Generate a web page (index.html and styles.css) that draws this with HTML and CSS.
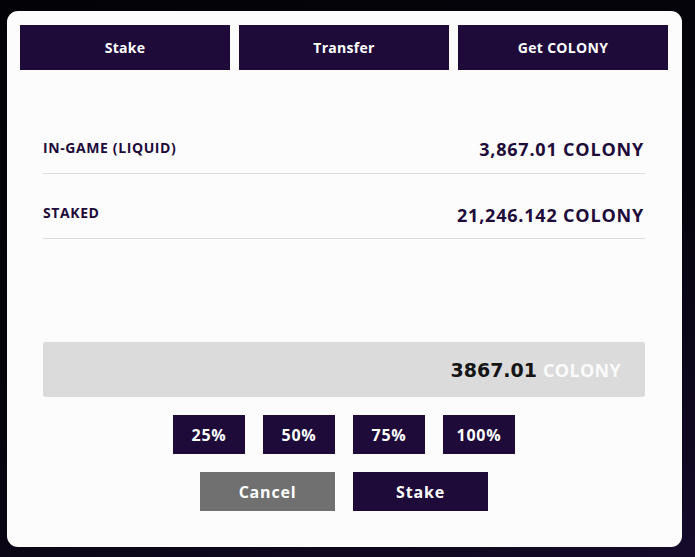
FILE: index.html
```html
<!DOCTYPE html>
<html lang="en">
<head>
    <meta charset="UTF-8">
    <meta name="viewport" content="width=device-width, initial-scale=1.0">
    <title>Stake COLONY</title>
    <link rel="stylesheet" href="styles.css">
</head>
<body>
    <div class="modal">
        <div class="tabs">
            <button class="tab">Stake</button>
            <button class="tab">Transfer</button>
            <button class="tab">Get COLONY</button>
        </div>

        <div class="content">
            <div class="balances">
                <div class="row">
                    <span class="label">IN-GAME (LIQUID)</span>
                    <span class="value">3,867.01 COLONY</span>
                </div>
                <div class="row">
                    <span class="label">STAKED</span>
                    <span class="value">21,246.142 COLONY</span>
                </div>
            </div>

            <div class="amount">
                <span class="amount-num">3867.01</span>
                <span class="amount-unit">COLONY</span>
            </div>

            <div class="percents">
                <button class="button pct">25%</button>
                <button class="button pct">50%</button>
                <button class="button pct">75%</button>
                <button class="button pct">100%</button>
            </div>

            <div class="actions">
                <button class="button action cancel">Cancel</button>
                <button class="button action">Stake</button>
            </div>
        </div>
    </div>
</body>
</html>
```

FILE: styles.css
```css
body {
    margin: 0;
    height: 557px;
    overflow: hidden;
    font-family: "Open Sans", "Noto Sans", sans-serif;
    background: linear-gradient(160deg, #030307 0%, #06050d 55%, #150a2a 100%);
}
.modal {
    margin: 11px 0 0 7px;
    width: 675px;
    height: 536px;
    box-sizing: border-box;
    padding: 14px 14px 0 13px;
    background: #fcfcfc;
    border-radius: 11px;
}
.tabs {
    display: grid;
    grid-template-columns: repeat(3, 1fr);
    gap: 9px;
}
.tab {
    height: 45px;
    border: none;
    background: #1e0b3a;
    color: #fff;
    font-family: inherit;
    font-weight: 700;
    font-size: 14px;
    letter-spacing: 0.3px;
    cursor: pointer;
}
.content {
    padding: 38px 23px 0 23px;
}
.row {
    display: flex;
    justify-content: space-between;
    align-items: center;
    height: 64px;
    border-bottom: 1px solid #dcdcdc;
}
.row:first-child {
    height: 65px;
}
.label {
    color: #1e0b3a;
    font-weight: 700;
    font-size: 14px;
    letter-spacing: 0.6px;
    margin-top: 13px;
}
.value {
    color: #1e0b3a;
    font-weight: 700;
    font-size: 18px;
    letter-spacing: 0.8px;
    margin-top: 17px;
    margin-right: 1px;
}
.amount {
    margin-top: 103px;
    height: 55px;
    background: #dbdbdb;
    border-radius: 2px;
    display: flex;
    justify-content: flex-end;
    align-items: center;
    padding-right: 24px;
    gap: 6px;
}
.amount-num {
    font-family: "DejaVu Sans", Verdana, sans-serif;
    font-weight: 700;
    font-size: 19px;
    color: #151515;
}
.amount-unit {
    font-weight: 700;
    font-size: 18px;
    letter-spacing: 0.3px;
    color: #fafafa;
}
.percents, .actions {
    display: flex;
    justify-content: center;
    gap: 18px;
    margin-top: 18px;
}
.button {
    height: 39px;
    border: none;
    background: #1e0b3a;
    color: #fff;
    font-family: inherit;
    font-weight: 700;
    font-size: 16px;
    letter-spacing: 0.8px;
    cursor: pointer;
}
.pct {
    width: 72px;
}
.action {
    width: 135px;
}
.cancel {
    background: #707070;
}
```
